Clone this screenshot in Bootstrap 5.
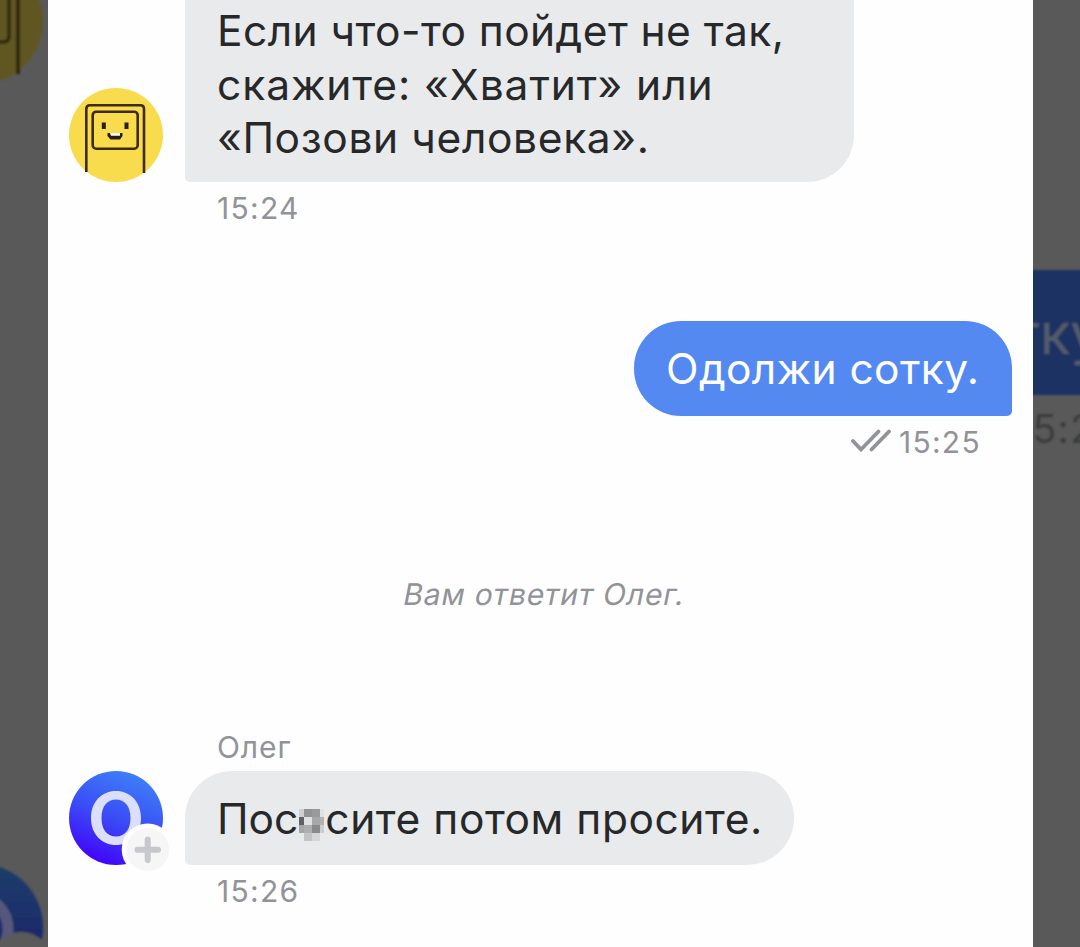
<!DOCTYPE html>
<html lang="ru">
<head>
    <meta charset="UTF-8">
    <meta name="viewport" content="width=device-width, initial-scale=1.0">
    <title>Чат</title>
    <link href="https://cdn.jsdelivr.net/npm/bootstrap@5.3.0/dist/css/bootstrap.min.css" rel="stylesheet">
    <style>
        body { font-family: Inter, "Liberation Sans", sans-serif; background: #595959; }
        .side { width: 48px; background: #595959; }
        .side-right { width: 47px; }
        .side svg { display: block; }
        .chat { width: 985px; background: #fefefe; }
        .incoming { padding-left: 21px; gap: 22px; }
        .outgoing { padding-right: 21px; margin-top: 87px; }
        .avatar { width: 94px; height: 94px; }
        .bubble { padding: 0 32px; font-size: 42.5px; line-height: 53.5px; color: #26282a; background: #e9eaec; white-space: nowrap; }
        .bubble-first { width: 669px; height: 182px; padding-top: 4px; border-radius: 0 0 47px 5px; }
        .line-a { letter-spacing: 0.43px; }
        .line-b { letter-spacing: 0.92px; }
        .line-c { letter-spacing: 0.62px; }
        .bubble-mine { width: 378px; height: 95px; line-height: 96px; letter-spacing: 0.4px; color: #fff; background: #5589f2; border-radius: 47px 47px 5px 47px; }
        .bubble-last { width: 609px; height: 94px; line-height: 95px; border-radius: 47px 47px 47px 5px; }
        .rest { letter-spacing: 0.55px; }
        .meta { height: 52px; line-height: 52px; font-size: 30px; letter-spacing: 1.3px; color: #919399; }
        .meta-left { padding-left: 169px; }
        .meta-right { padding-right: 52px; gap: 7px; }
        .notice { margin-top: 100px; height: 52px; line-height: 52px; font-size: 30px; letter-spacing: 0.85px; color: #919399; padding-left: 8px; }
        .notice span { display: inline-block; transform: skewX(-11deg); }
        .sender { margin-top: 102px; height: 49px; line-height: 50px; letter-spacing: 0.9px; }
        .pixels { vertical-align: -7px; margin: 0 1px 0 1px; }
    </style>
</head>
<body>
    <div class="d-flex vh-100 overflow-hidden">
        <div class="side flex-shrink-0">
            <svg width="48" height="947" viewBox="0 0 48 947">
                <defs>
                    <linearGradient id="sideBlue" x1="0" y1="0" x2="0" y2="1">
                        <stop offset="0" stop-color="#1d3e6c"/>
                        <stop offset="1" stop-color="#1b1c66"/>
                    </linearGradient>
                    <filter id="soft"><feGaussianBlur stdDeviation="1.2"/></filter>
                </defs>
                <g filter="url(#soft)">
                    <circle cx="-20" cy="21" r="63" fill="#605723"/>
                    <path d="M18 -5V74" stroke="#2e2611" stroke-width="4"/>
                    <path d="M9 -5V36Q9 42 3 42H-5" fill="none" stroke="#2e2611" stroke-width="3.5"/>
                    <circle cx="-20" cy="927" r="63" fill="url(#sideBlue)"/>
                    <ellipse cx="-20" cy="929" rx="28" ry="31" fill="none" stroke="#55597c" stroke-width="11"/>
                    <circle cx="21" cy="964" r="32" fill="#5a5a5a"/>
                </g>
            </svg>
        </div>

        <main class="chat flex-shrink-0">
            <div class="incoming d-flex align-items-end">
                <svg class="avatar" viewBox="0 0 94 94">
                    <circle cx="47" cy="47" r="47" fill="#f8dc4e"/>
                    <g fill="none" stroke="#3f2b0b" stroke-width="2.6">
                        <path d="M17.3 84V21Q17.3 17.3 21 17.3H71.500Q75 17.3 75 21V85"/>
                        <rect x="23.7" y="23.700" width="45" height="37" rx="3.500"/>
                    </g>
                    <path d="M32.800 34.500h4v6.500h-4zM55.500 34.500h4v6.500h-4z" fill="#2b1d08"/>
                    <path d="M38.500 45h2.500l1 1.500h8l1-1.500h2.500v3l-2.500 3.500h-9.500l-3-3.500z" fill="#2b1d08"/>
                    <path d="M41 45.200h10v2.500h-9z" fill="#fff"/>
                </svg>
                <div class="bubble bubble-first">
                    <div class="line-a">Если что-то пойдет не так,</div>
                    <div class="line-b">скажите: «Хватит» или</div>
                    <div class="line-c">«Позови человека».</div>
                </div>
            </div>
            <div class="meta meta-left">15:24</div>

            <div class="outgoing d-flex justify-content-end">
                <div class="bubble bubble-mine">Одолжи сотку.</div>
            </div>
            <div class="meta meta-right d-flex justify-content-end align-items-center">
                <svg width="42" height="26" viewBox="0 0 42 26" fill="none" stroke="#919399" stroke-width="3.800" stroke-linecap="round">
                    <path d="M3 12L11 20.500L28.500 2.500M21.500 20.500L39 2.500"/>
                </svg>
                <span>15:25</span>
            </div>

            <div class="notice text-center"><span>Вам ответит Олег.</span></div>

            <div class="meta meta-left sender">Олег</div>
            <div class="incoming d-flex align-items-end">
                <svg class="avatar overflow-visible" viewBox="0 0 94 94">
                    <defs>
                        <linearGradient id="blue" x1="0.700" y1="0" x2="0.300" y2="1">
                            <stop offset="0" stop-color="#3e82f8"/>
                            <stop offset="0.500" stop-color="#3a4df5"/>
                            <stop offset="1" stop-color="#4200fa"/>
                        </linearGradient>
                    </defs>
                    <circle cx="47" cy="47" r="47" fill="url(#blue)"/>
                    <path fill="#dcdffa" fill-rule="evenodd" d="M47 20C61 20 72 30.500 72 47S61 74 47 74S22 63.500 22 47S33 20 47 20zM47 28.500C38.500 28.500 32.500 35 32.500 47S38.500 65.500 47 65.500S61.500 59 61.500 47S55.500 28.500 47 28.500z"/>
                    <circle cx="78.700" cy="78.500" r="26" fill="#fefefe"/>
                    <circle cx="78.700" cy="78.500" r="21.500" fill="#f6f6f6"/>
                    <path d="M78.700 68.500v20.500M68.500 78.700h20.500" stroke="#c7c8cb" stroke-width="6" stroke-linecap="round"/>
                </svg>
                <div class="bubble bubble-last">Пос<svg class="pixels" width="25" height="32" viewBox="0 0 25 32" shape-rendering="crispEdges">
                    <path d="M0 0h5v8H0z" fill="#cfd0d1"/><path d="M5 0h8v8H5z" fill="#929394"/><path d="M13 0h8v8h-8z" fill="#999a9b"/><path d="M21 0h4v8h-4z" fill="#e0e1e2"/>
                    <path d="M0 8h5v8H0z" fill="#606163"/><path d="M5 8h8v8H5z" fill="#b1b2b3"/><path d="M13 8h8v8h-8z" fill="#a6a7a9"/><path d="M5 8h8v8H5z" fill="#dfe0e1"/><path d="M21 8h4v8h-4z" fill="#b1b2b3"/>
                    <path d="M0 16h5v8H0z" fill="#a4a5a7"/><path d="M5 16h8v8H5z" fill="#adaeb0"/><path d="M13 16h8v8h-8z" fill="#88898b"/><path d="M21 16h4v8h-4z" fill="#cdced0"/>
                    <path d="M5 24h8v8H5z" fill="#c2c3c4"/><path d="M13 24h8v8h-8z" fill="#d5d6d7"/>
                </svg><span class="rest">сите потом просите.</span></div>
            </div>
            <div class="meta meta-left">15:26</div>
        </main>

        <div class="side side-right flex-shrink-0">
            <svg width="47" height="947" viewBox="0 0 47 947">
                <g filter="url(#soft)">
                    <path d="M-5 270H52V395H-5z" fill="#1f3263"/>
                    <g font-family="Inter, sans-serif">
                        <text x="-20" y="354" font-size="56" fill="#535b6b">тку.</text>
                        <text x="-18" y="443" font-size="40" letter-spacing="1" fill="#3b3c3d">15:25</text>
                    </g>
                </g>
            </svg>
        </div>
    </div>

    <script src="https://cdn.jsdelivr.net/npm/bootstrap@5.3.0/dist/js/bootstrap.bundle.min.js"></script>
</body>
</html>
